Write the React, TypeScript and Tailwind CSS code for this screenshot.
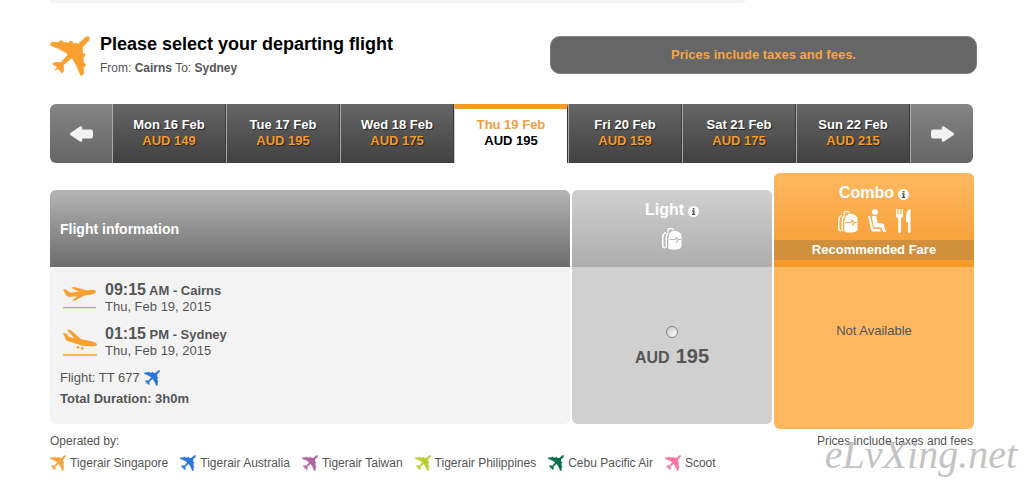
import { useState } from "react";

interface Day {
  label: string;
  price: string;
}

interface Airline {
  name: string;
  color: string;
}

const days: Day[] = [
  { label: "Mon 16 Feb", price: "AUD 149" },
  { label: "Tue 17 Feb", price: "AUD 195" },
  { label: "Wed 18 Feb", price: "AUD 175" },
  { label: "Thu 19 Feb", price: "AUD 195" },
  { label: "Fri 20 Feb", price: "AUD 159" },
  { label: "Sat 21 Feb", price: "AUD 175" },
  { label: "Sun 22 Feb", price: "AUD 215" },
];

const airlines: Airline[] = [
  { name: "Tigerair Singapore", color: "text-[#f9a53c]" },
  { name: "Tigerair Australia", color: "text-[#2a76dd]" },
  { name: "Tigerair Taiwan", color: "text-[#b0659f]" },
  { name: "Tigerair Philippines", color: "text-[#b9cf32]" },
  { name: "Cebu Pacific Air", color: "text-[#06704a]" },
  { name: "Scoot", color: "text-[#fb74a8]" },
];

const PlaneIcon = ({ className }: { className: string }) => (
  <svg
    viewBox="0 0 120 120"
    className={className}
    fill="currentColor"
    stroke="currentColor"
    strokeWidth="2"
    strokeLinejoin="round"
    aria-hidden="true"
  >
    <path d="M117 3Q112-1 105 5L86 23 67 22V17Q66 14 59 16L58 21 38 19 37 15Q35 13 29 15V19L6 19Q1 21 2 28L30 40 55 54 33 80 14 79 8 84 22 94 15 102 26 98 36 112 41 106 40 87 66 65 80 90 92 118Q99 118 101 114L101 91H105Q108 85 105 83L101 82 99 62H103Q107 56 104 53L98 53 97 34 115 15Q121 8 117 3Z" />
  </svg>
);

const TakeoffIcon = () => (
  <svg viewBox="0 0 102 66" className="w-[34px] shrink-0" fill="#f9a030" aria-hidden="true">
    <path d="M0 8 8 7 22 17 48 14 24 2 34 0 70 10 90 8Q99 9 99 15 97 20 88 22L62 26 36 41 27 41 42 28 18 30Q12 29 9 24Z" />
    <path d="M0 60H99V64H0Z" />
  </svg>
);

const LandingIcon = () => (
  <svg viewBox="0 0 102 81" className="w-[34px] shrink-0" fill="#f9a030" aria-hidden="true">
    <path d="M12 2 22 2 54 31 86 37Q102 41 102 48 99 53 84 52L58 50 12 35Q8 33 7 29L0 12 8 13 20 25 33 27Z" />
    <circle cx="45" cy="55" r="4" />
    <circle cx="58" cy="58" r="4" />
    <path d="M0 76H102V80H0Z" />
  </svg>
);

const ArrowIcon = ({ className = "" }: { className?: string }) => (
  <svg viewBox="0 0 23 16" className={`w-[23px] ${className}`} fill="#f2f2f2" aria-hidden="true">
    <path d="M0 7.300 10 .4Q12 0 12.300 1.500V3.500H21Q23 3.500 23 5.500V10.500Q23 12.500 21 12.500H12.300V14.500Q12 16 10 15.600L0 8.700Z" />
  </svg>
);

const InfoIcon = () => (
  <svg viewBox="0 0 11 11" className="mt-0.5 w-[11px]" aria-hidden="true">
    <circle cx="5.500" cy="5.500" r="5.500" fill="#fff" />
    <path d="M4.700 2H6.500V3.400H4.700ZM4 4.300H6.500V8H7.200V9H4V8H4.700V5.200H4Z" fill="#555" />
  </svg>
);

const BackpackIcon = ({ line }: { line: string }) => (
  <svg viewBox="0 0 20 22" className="h-[22px]" aria-hidden="true">
    <path d="M4 4.500Q.8 5.500.8 10V17.500Q.8 19.500 3 20" fill="none" stroke="#fff" strokeWidth="1.500" />
    <path d="M6 4V1.500Q6 .7 7 .7H10Q11.200.7 11.500 2.500" fill="none" stroke="#fff" strokeWidth="1.300" />
    <path d="M5 5Q3.500 7 3.500 11V19.500L5 20.500V10Q5 6.500 7.500 4Z" fill="#fff" />
    <path d="M6.300 11Q6.500 3 12.700 2.800 19.300 3 19.500 9V18.500Q18.500 21.500 14 21.500H8.500Q6.300 21.500 6.300 19Z" fill="#fff" />
    <path d="M7.500 11.500H13L15 10M13.500 8.500 16 11.500 14.500 15M15.500 11.500H19" fill="none" stroke={line} strokeWidth="1.100" />
  </svg>
);

const SeatIcon = () => (
  <svg viewBox="0 0 18 24" className="h-6" fill="#fff" aria-hidden="true">
    <circle cx="7" cy="2.900" r="2.900" />
    <path d="M4 8Q5 6.300 7 6.800 8.500 7 8.800 9L9.500 14 15 14.500Q16 15 16.200 17L18 23H15L13.500 18.500H8Q6 18.500 5.500 16.500Z" />
    <path d="M0 7H2L5 18.500Q5.500 20 7 20H12.500V22.500H5.500Q3.500 22.500 3 20.500Z" />
  </svg>
);

const CutleryIcon = () => (
  <svg viewBox="0 0 15 24" className="h-6" fill="#fff" aria-hidden="true">
    <path d="M0 0H1.200V5.500H2.500V0H4.200V5.500H5.500V0H7V6.500Q7 8.500 5 9.300V22.500Q5 24 3.600 24 2.200 24 2.200 22.500V9.300Q0 8.500 0 6.500Z" />
    <path d="M14.500 0V23Q14 24 13.200 24 12 24 12 22.500V13.500L10 12.500Q9.500 4 12 1.500 13.200 0 14.500 0Z" />
  </svg>
);

const DateStrip = () => {
  const [selected, setSelected] = useState(3);

  return (
    <nav aria-label="Departure date" className="mt-7 mr-1 flex h-[59px] overflow-hidden rounded-md">
      <button
        aria-label="Previous days"
        className="flex w-[62px] items-center justify-center bg-linear-to-b from-[#858585] to-[#656565]"
      >
        <ArrowIcon />
      </button>
      {days.map((day, index) => {
        const active = index === selected;
        return (
          <button
            key={day.label}
            onClick={() => setSelected(index)}
            className={
              active
                ? "flex-1 border-t-[5px] border-r border-l border-t-[#f39a2b] border-r-[#333] border-l-[#ccc] bg-white pt-2 pb-3.5 text-[13px] leading-4 font-bold"
                : "flex-1 border-r border-l border-r-[#3c3c3c] border-l-[#aaa] bg-linear-to-b from-[#666] to-[#414141] pt-[13px] pb-3.5 text-[13px] leading-4 font-bold [text-shadow:1px_1px_1px_#222]"
            }
          >
            <span className={active ? "block text-[#efa040]" : "block text-white"}>{day.label}</span>
            <span className={active ? "block text-black" : "block text-[#f39a2b]"}>{day.price}</span>
          </button>
        );
      })}
      <button
        aria-label="Next days"
        className="flex w-[63px] items-center justify-center border-l border-[#aaa] bg-linear-to-b from-[#858585] to-[#656565]"
      >
        <ArrowIcon className="rotate-180" />
      </button>
    </nav>
  );
};

const FlightInfo = () => (
  <section className="mt-[17px] mb-[5px] overflow-hidden rounded-md bg-[#f3f3f3]">
    <h2 className="flex h-[77px] items-center bg-linear-to-b from-[#b5b5b5] to-[#6d6d6d] px-2.5 text-sm font-bold text-white">
      Flight information
    </h2>
    <div className="px-2.5 pt-3.5 pb-[17px] text-[13px] leading-4">
      <div className="flex items-center gap-2 pl-[3px]">
        <TakeoffIcon />
        <div>
          <p className="leading-[17px] font-bold">
            <span className="text-base leading-[17px]">09:15</span> AM - Cairns
          </p>
          <p>Thu, Feb 19, 2015</p>
        </div>
      </div>
      <div className="mt-2.5 flex items-center gap-2 pl-[3px]">
        <LandingIcon />
        <div>
          <p className="leading-[17px] font-bold">
            <span className="text-base leading-[17px]">01:15</span> PM - Sydney
          </p>
          <p>Thu, Feb 19, 2015</p>
        </div>
      </div>
      <p className="mt-[11px] flex items-center gap-1">
        Flight: TT 677 <PlaneIcon className="size-4 text-[#2a76dd]" />
      </p>
      <p className="mt-[5px] font-bold">Total Duration: 3h0m</p>
    </div>
  </section>
);

const LightFare = () => (
  <section className="mt-[17px] mb-[5px] flex flex-col overflow-hidden rounded-md bg-[#d0d0d0]">
    <div className="flex h-[77px] flex-col items-center bg-linear-to-b from-[#d0d0d0] to-[#adadad] pt-2.5 text-white">
      <h2 className="flex items-center gap-1 text-base leading-5 font-bold">
        Light <InfoIcon />
      </h2>
      <div className="mt-2">
        <BackpackIcon line="#b8b8b8" />
      </div>
    </div>
    <label className="flex flex-col items-center pt-[59px] font-bold">
      <input
        type="radio"
        name="fare"
        className="size-3 appearance-none rounded-full border border-[#808080] bg-linear-to-br from-[#c8c8c8] to-white checked:bg-[#555]"
      />
      <span className="mt-1.5 flex items-baseline gap-1.5 text-base leading-6">
        AUD <span className="text-xl leading-6">195</span>
      </span>
    </label>
  </section>
);

const ComboFare = () => (
  <section className="overflow-hidden rounded-md bg-[#ffb860]">
    <div className="flex h-[94px] flex-col items-center bg-linear-to-b from-[#ffb860] to-[#f59a28] pt-2.5 text-white">
      <h2 className="flex items-center gap-1 text-base leading-5 font-bold">
        Combo <InfoIcon />
      </h2>
      <div className="mt-1.5 flex items-end gap-2.5">
        <BackpackIcon line="#fba942" />
        <SeatIcon />
        <CutleryIcon />
      </div>
      <p className="mt-[7px] w-full bg-[#d1903c] text-center text-[13px] leading-5 font-bold">
        Recommended Fare
      </p>
    </div>
    <p className="pt-14 text-center text-[13px] leading-4">Not Available</p>
  </section>
);

const App = () => {
  return (
    <main className="relative bg-white px-[50px] pb-4 font-['Liberation_Sans',Arial,sans-serif] text-[#555]">
      <div className="h-[3px] w-3/4 rounded-b-md bg-[#f3f3f3]" />

      <header className="mt-[33px] flex items-start">
        <PlaneIcon className="size-10 text-[#f9a030]" />
        <div className="ml-2.5 flex-1">
          <h1 className="-mt-0.5 text-lg leading-5 font-bold text-black">Please select your departing flight</h1>
          <p className="mt-1.5 text-xs leading-4">
            From: <b>Cairns</b> To: <b>Sydney</b>
          </p>
        </div>
        <p className="w-[427px] rounded-[10px] border border-[#808080] bg-[#666] py-2 text-center text-[13px] leading-5 font-bold text-[#f3a545]">
          Prices include taxes and fees.
        </p>
      </header>

      <DateStrip />

      <div className="mt-2.5 mr-[3px] grid grid-cols-[1fr_200px_200px] gap-0.5">
        <FlightInfo />
        <LightFare />
        <ComboFare />
      </div>

      <footer className="mt-1 mr-1 text-xs leading-4">
        <div className="flex justify-between">
          <p>Operated by:</p>
          <p>Prices include taxes and fees</p>
        </div>
        <ul className="mt-1.5 flex gap-3">
          {airlines.map((airline) => (
            <li key={airline.name} className="flex items-center gap-1">
              <PlaneIcon className={`size-4 ${airline.color}`} />
              {airline.name}
            </li>
          ))}
        </ul>
      </footer>

      <span className="pointer-events-none absolute right-2.5 bottom-3 font-['Liberation_Serif',serif] text-[40px] leading-10 text-[#b5b5b5] italic opacity-80">
        eLvXing.net
      </span>
    </main>
  );
};

export default App;
